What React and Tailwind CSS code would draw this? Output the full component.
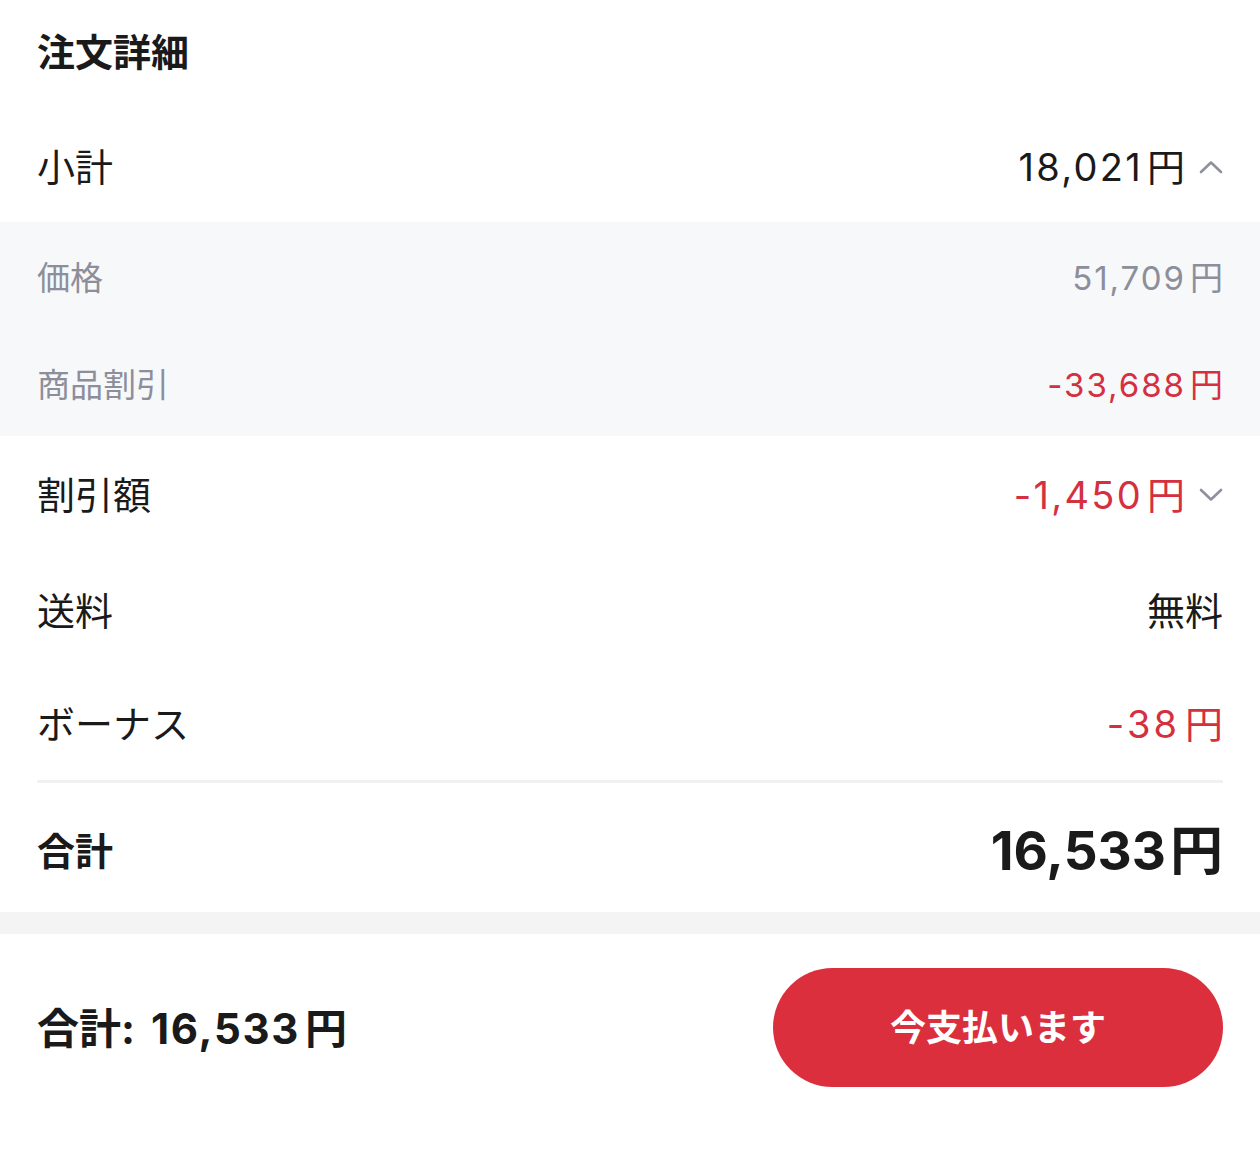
import React from "react";

const FONT = { fontFamily: 'Inter, "Noto Sans CJK JP", sans-serif' };

function Chevron({ up }) {
  return (
    <svg width="24" height="14" viewBox="0 0 24 14" className="ml-[14px]" fill="none">
      <path
        d={up ? "M2 12 L12 2.5 L22 12" : "M2 2 L12 11.5 L22 2"}
        stroke="#8e909b"
        strokeWidth="2.6"
        strokeLinecap="round"
        strokeLinejoin="round"
      />
    </svg>
  );
}

function Yen({ n, gap = "ml-[4px]", track = "tracking-[0.06em]" }) {
  return (
    <>
      <span className={track}>{n}</span>
      <span className={gap}>円</span>
    </>
  );
}

function Row({ label, value, valueClass = "text-[#1a1a1a]", chevron, h = "h-[114px]", pad = "" }) {
  return (
    <div className={`flex items-center justify-between px-[37px] ${h} ${pad}`}>
      <span className="text-[38px] text-[#1a1a1a]">{label}</span>
      <span className="flex items-center">
        <span className={`text-[38px] ${valueClass}`}>{value}</span>
        {chevron}
      </span>
    </div>
  );
}

function SubRow({ label, value, valueClass }) {
  return (
    <div className="flex items-center justify-between px-[37px] h-[107px] pt-[6px]">
      <span className="text-[33px] text-[#8c8e9a]">{label}</span>
      <span className={`text-[33px] ${valueClass}`}>{value}</span>
    </div>
  );
}

export default function App() {
  return (
    <div className="w-[1260px] h-[1154px] bg-white flex flex-col leading-none" style={FONT}>
      <div className="h-[104px] flex items-center px-[37px]">
        <h1 className="text-[38px] font-bold text-[#1a1a1a]">注文詳細</h1>
      </div>
      <Row label="小計" value={<Yen n="18,021" />} h="h-[118px]" pad="pt-[7px]" chevron={<Chevron up />} />
      <div className="bg-[#f7f8fa]">
        <SubRow label="価格" value={<Yen n="51,709" />} valueClass="text-[#8c8e9a]" />
        <SubRow label="商品割引" value={<Yen n="-33,688" />} valueClass="text-[#d4303f]" />
      </div>
      <Row label="割引額" value={<Yen n="-1,450" />} valueClass="text-[#d4303f]" h="h-[118px]" chevron={<Chevron />} />
      <Row label="送料" value="無料" h="h-[114px]" />
      <Row label="ボーナス" value={<Yen n="-38" gap="ml-[5px]" track="tracking-[0.08em]" />} valueClass="text-[#d4303f]" h="h-[112px]" />
      <div className="mx-[37px] h-[3px] bg-[#f1f1f1]" />
      <div className="flex items-center justify-between px-[37px] h-[129px] pt-[7px]">
        <span className="text-[38px] font-bold text-[#1a1a1a]">合計</span>
        <span className="text-[53px] font-bold text-[#1a1a1a]">
          <Yen n="16,533" track="tracking-[0em]" gap="ml-[4px]" />
        </span>
      </div>
      <div className="h-[22px] bg-[#f4f4f4]" />
      <div className="flex items-start justify-between px-[37px] pt-[34px]">
        <div className="h-[119px] flex items-center pt-[3px]">
          <span className="text-[42px] font-bold text-[#1a1a1a]">
            合計:<span className="ml-[16px] tracking-[0.04em]">16,533</span>
            <span className="ml-[5px]">円</span>
          </span>
        </div>
        <button className="w-[450px] h-[119px] rounded-full bg-[#dc2f3e] text-white text-[36px] font-bold flex items-center justify-center">
          今支払います
        </button>
      </div>
    </div>
  );
}
